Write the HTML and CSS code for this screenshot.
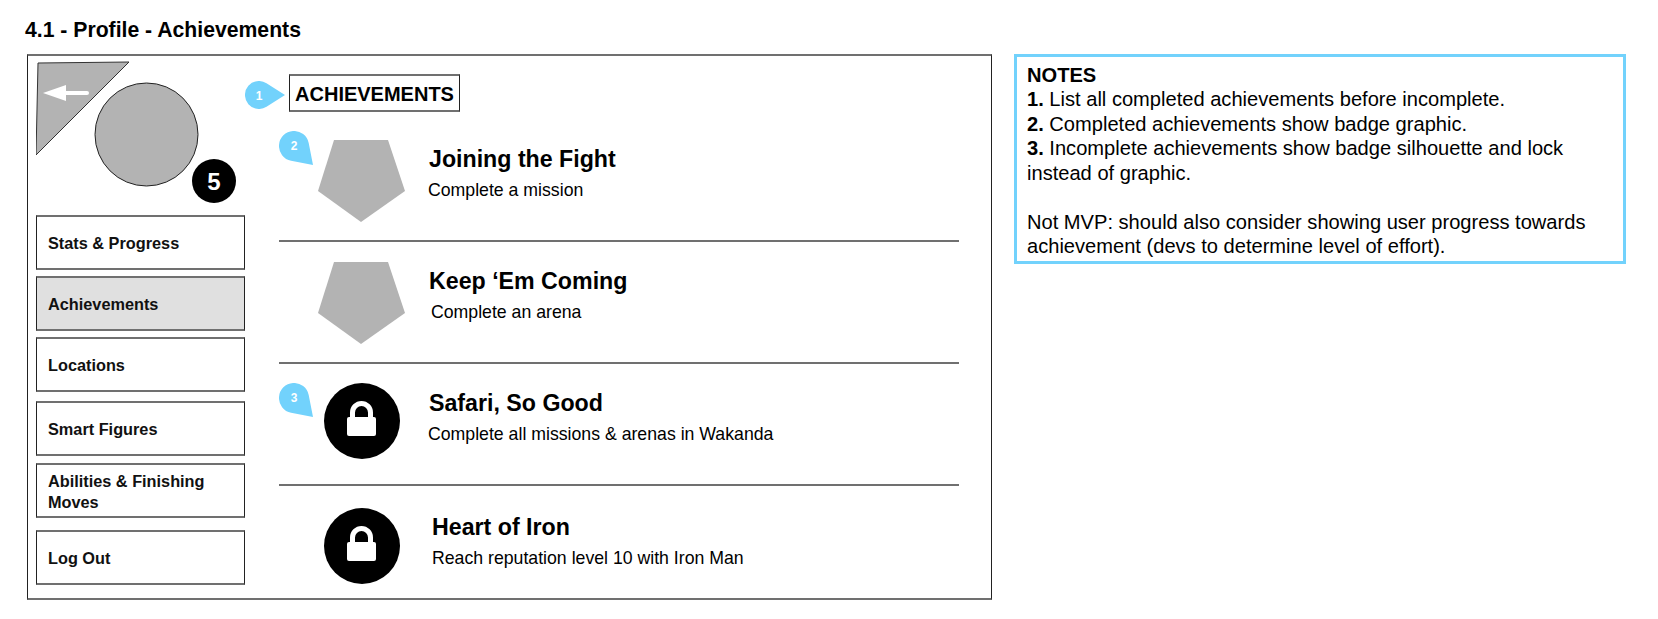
FILE: index.html
```html
<!DOCTYPE html>
<html lang="en">
<head>
  <meta charset="UTF-8">
  <title>4.1 - Profile - Achievements</title>
  <link rel="stylesheet" href="styles.css">
</head>
<body>
  <h1 class="page-title">4.1 - Profile - Achievements</h1>

  <div class="board">
    <!-- Wireframe -->
    <div class="frame">
      <div class="sidebar">
        <svg class="avatar" viewBox="36 56 209 159" width="209" height="159">
          <polygon points="38,63 129,62 36,155" fill="#b3b3b3" stroke="#333" stroke-width="1"/>
          <path d="M87 93H62" stroke="#fff" stroke-width="4" stroke-linecap="round"/>
          <polygon points="43,93 66,85 66,101" fill="#fff"/>
          <circle cx="146.500" cy="134.500" r="51.500" fill="#b3b3b3" stroke="#222" stroke-width="1"/>
          <circle cx="214" cy="181" r="22" fill="#000"/>
          <text class="avatar-level" x="214" y="190" text-anchor="middle">5</text>
        </svg>
        <div class="nav-item">Stats &amp; Progress</div>
        <div class="nav-item active">Achievements</div>
        <div class="nav-item">Locations</div>
        <div class="nav-item">Smart Figures</div>
        <div class="nav-item">Abilities &amp; Finishing Moves</div>
        <div class="nav-item">Log Out</div>
      </div>

      <div class="content">
        <div class="section-title">
          ACHIEVEMENTS
          <svg class="callout callout-right" viewBox="0 0 40 28" width="40" height="28">
            <path d="M40 14L21.500 25.800A14 14 0 1 1 21.500 2.200Z"/>
            <text x="14" y="18.500" text-anchor="middle">1</text>
          </svg>
        </div>

        <div class="row">
          <svg class="callout callout-down" viewBox="0 0 34 34" width="34" height="34">
            <path d="M34 34L12.100 29.700A15 15 0 1 1 29.700 12.100Z"/>
            <text x="15" y="19" text-anchor="middle">2</text>
          </svg>
          <div class="badge">
            <svg viewBox="0 0 87 82" width="87" height="82">
              <polygon points="16,0 70,0 87,51 43,82 0,51" fill="#b3b3b3"/>
            </svg>
          </div>
          <div class="row-text">
            <div class="row-title">Joining the Fight</div>
            <div class="row-sub">Complete a mission</div>
          </div>
        </div>

        <div class="row">
          <div class="badge">
            <svg viewBox="0 0 87 82" width="87" height="82">
              <polygon points="16,0 70,0 87,51 43,82 0,51" fill="#b3b3b3"/>
            </svg>
          </div>
          <div class="row-text">
            <div class="row-title">Keep ‘Em Coming</div>
            <div class="row-sub row-sub-shift">Complete an arena</div>
          </div>
        </div>

        <div class="row">
          <svg class="callout callout-down callout-low" viewBox="0 0 34 34" width="34" height="34">
            <path d="M34 34L12.100 29.700A15 15 0 1 1 29.700 12.100Z"/>
            <text x="15" y="19" text-anchor="middle">3</text>
          </svg>
          <div class="badge badge-up">
            <svg viewBox="0 0 76 76" width="76" height="76">
              <circle cx="38" cy="38" r="38" fill="#000"/>
              <path d="M28.500 36V29.500a9 9 0 0 1 18 0V36" fill="none" stroke="#fff" stroke-width="5"/>
              <rect x="23" y="34" width="29" height="19" rx="2" fill="#fff"/>
            </svg>
          </div>
          <div class="row-text">
            <div class="row-title">Safari, So Good</div>
            <div class="row-sub">Complete all missions &amp; arenas in Wakanda</div>
          </div>
        </div>

        <div class="row row-last">
          <div class="badge">
            <svg viewBox="0 0 76 76" width="76" height="76">
              <circle cx="38" cy="38" r="38" fill="#000"/>
              <path d="M28.500 36V29.500a9 9 0 0 1 18 0V36" fill="none" stroke="#fff" stroke-width="5"/>
              <rect x="23" y="34" width="29" height="19" rx="2" fill="#fff"/>
            </svg>
          </div>
          <div class="row-text row-text-shift">
            <div class="row-title">Heart of Iron</div>
            <div class="row-sub row-sub-flush">Reach reputation level 10 with Iron Man</div>
          </div>
        </div>
      </div>
    </div>

    <!-- Notes -->
    <div class="notes">
      <div><b>NOTES</b></div>
      <div><b>1.</b> List all completed achievements before incomplete.</div>
      <div><b>2.</b> Completed achievements show badge graphic.</div>
      <div><b>3.</b> Incomplete achievements show badge silhouette and lock instead of graphic.</div>
      <div class="notes-gap">Not MVP: should also consider showing user progress towards achievement (devs to determine level of effort).</div>
    </div>
  </div>
</body>
</html>
```

FILE: styles.css
```css
/* General Reset */
* {
  margin: 0;
  padding: 0;
  box-sizing: border-box;
}

html, body {
  width: 100%;
  height: 100%;
  overflow: hidden;
}

body {
  font-family: 'Liberation Sans', Arial, sans-serif;
  background-color: #fff;
  color: #000;
  padding: 18px 25px 0;
}

.page-title {
  font-size: 21.200px;
  line-height: 24px;
  font-weight: 700;
}

.board {
  display: flex;
  align-items: flex-start;
  gap: 22px;
  margin-top: 12px;
  margin-left: 2px;
}

/* Wireframe frame */
.frame {
  display: flex;
  width: 965px;
  height: 546px;
  border: solid #707070;
  border-width: 2px 1px;
  border-left-color: #222;
  border-right-color: #222;
}

/* Sidebar */
.sidebar {
  display: flex;
  flex-direction: column;
  width: 209px;
  margin-left: 8px;
  flex-shrink: 0;
}

.avatar {
  display: block;
}

.avatar-level {
  font-size: 24px;
  font-weight: 700;
  fill: #fff;
}

.nav-item {
  display: flex;
  align-items: center;
  height: 55px;
  padding: 2px 11px 0;
  margin-bottom: 6px;
  font-size: 16.300px;
  line-height: 21px;
  font-weight: 700;
  color: #111;
  border: solid #707070;
  border-width: 2px 1px;
  border-left-color: #222;
  border-right-color: #222;
}

.nav-item.active {
  background-color: #e0e0e0;
}

.nav-item:nth-child(4) {
  margin-bottom: 9px;
}

.nav-item:nth-child(5) {
  margin-bottom: 7px;
}

.nav-item:nth-child(6) {
  margin-bottom: 12px;
}

/* Content */
.content {
  flex: 1;
  margin-left: 34px;
  margin-right: 32px;
  padding-top: 18px;
}

.section-title {
  position: relative;
  width: 171px;
  height: 38px;
  margin-left: 10px;
  margin-bottom: 8px;
  font-size: 20px;
  line-height: 36px;
  font-weight: 700;
  text-align: center;
  border: solid #707070;
  border-width: 2px 1px;
  border-left-color: #222;
  border-right-color: #222;
}

.row {
  position: relative;
  display: flex;
  align-items: flex-start;
  height: 122px;
  padding-top: 20px;
  border-bottom: 2px solid #707070;
}

.row-last {
  border-bottom: none;
  padding-top: 22px;
}

.badge {
  display: flex;
  justify-content: center;
  width: 87px;
  margin-left: 39px;
  flex-shrink: 0;
}

.badge svg {
  display: block;
}

.badge-up {
  margin-top: -1px;
}

.row-text {
  margin-left: 24px;
  padding-top: 4px;
}

.row-text-shift {
  margin-left: 27px;
}

.row-title {
  font-size: 23.200px;
  line-height: 30px;
  font-weight: 700;
}

.row-sub {
  margin-top: 4px;
  margin-left: -1px;
  font-size: 17.700px;
  line-height: 24px;
}

.row-sub-shift {
  margin-left: 2px;
}

.row-sub-flush {
  margin-left: 0;
}

/* Numbered callouts */
.callout {
  position: absolute;
  display: block;
  fill: #72d2fc;
}

.callout text {
  font-size: 12px;
  font-weight: 700;
  fill: #fff;
}

.callout-right {
  left: -45px;
  top: 5px;
}

.callout-down {
  left: 0;
  top: 11px;
}

.callout-low {
  top: 19px;
}

/* Notes */
.notes {
  width: 612px;
  height: 210px;
  padding: 5.500px 10px;
  font-size: 20.100px;
  line-height: 24.500px;
  border: 3px solid #72d2fc;
}

.notes-gap {
  margin-top: 24.500px;
}
```
